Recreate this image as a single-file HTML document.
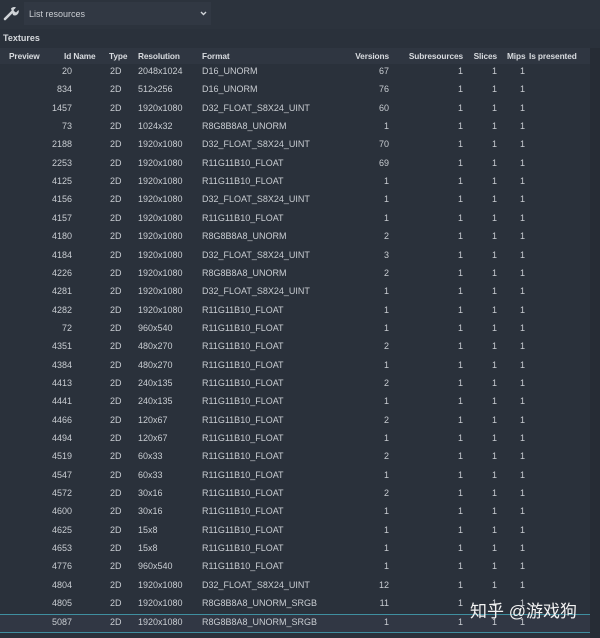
<!DOCTYPE html>
<html><head><style>
body{margin:0;width:600px;height:638px;background:#2a313b;font-family:"Liberation Sans",sans-serif;font-size:9px;color:#c9cdd2;overflow:hidden;position:relative}
.top{position:absolute;left:0;top:0;width:600px;height:29px;background:#2c333d}
.dd{position:absolute;left:24px;top:2px;width:187px;height:23px;background:#313843}
.dd span{position:absolute;left:5px;top:7px;font-size:9px;color:#c9cdd2}
.tex{position:absolute;left:3px;top:33px;font-weight:bold;color:#d6d9dd}
.hdr{position:absolute;left:0;top:48px;width:590px;height:16px;background:#2f3641}
.c{position:absolute;white-space:nowrap}
.r{text-align:right}
.h{font-weight:bold;color:#d9dce0;font-size:8.3px;letter-spacing:-0.1px}
.sb{position:absolute;left:590px;top:48px;width:10px;height:590px;background:#262c35}
</style></head><body>
<div class="top"></div>
<svg style="position:absolute;left:3px;top:5px" width="16" height="16" viewBox="0 0 16 16"><path d="M2 14 L9 7" stroke="#d0d4d8" stroke-width="2.6" stroke-linecap="round"/><path d="M8 3.5 a4 4 0 0 1 5 -1 l-2.5 2.5 1 1.5 1.5 1 2.5 -2.5 a4 4 0 0 1 -5.5 5 z" fill="#d0d4d8"/></svg>
<div class="dd"><span>List resources</span><svg style="position:absolute;left:176px;top:9px" width="7" height="5"><path d="M1 1 L3.5 3.5 L6 1" stroke="#d0d4d8" stroke-width="1.4" fill="none"/></svg></div>
<div class="tex">Textures</div>
<div class="hdr"></div>
<div class="sb"></div>
<div id="t"></div>
<script>
var hd=[["Preview",9,null],["Id Name",64,null],["Type",109,null],["Resolution",138,null],["Format",202,null],["Versions",null,389],["Subresources",null,463],["Slices",null,497],["Mips",507,null],["Is presented",529,null]];
var h='';hd.forEach(function(x){h+='<div class="c h" style="top:51px;'+(x[1]!==null?'left:'+x[1]+'px':'right:'+(600-x[2])+'px')+'">'+x[0]+'</div>';});
var rows=[["20","2048x1024","D16_UNORM",67],["834","512x256","D16_UNORM",76],["1457","1920x1080","D32_FLOAT_S8X24_UINT",60],["73","1024x32","R8G8B8A8_UNORM",1],["2188","1920x1080","D32_FLOAT_S8X24_UINT",70],["2253","1920x1080","R11G11B10_FLOAT",69],["4125","1920x1080","R11G11B10_FLOAT",1],["4156","1920x1080","D32_FLOAT_S8X24_UINT",1],["4157","1920x1080","R11G11B10_FLOAT",1],["4180","1920x1080","R8G8B8A8_UNORM",2],["4184","1920x1080","D32_FLOAT_S8X24_UINT",3],["4226","1920x1080","R8G8B8A8_UNORM",2],["4281","1920x1080","D32_FLOAT_S8X24_UINT",1],["4282","1920x1080","R11G11B10_FLOAT",1],["72","960x540","R11G11B10_FLOAT",1],["4351","480x270","R11G11B10_FLOAT",2],["4384","480x270","R11G11B10_FLOAT",1],["4413","240x135","R11G11B10_FLOAT",2],["4441","240x135","R11G11B10_FLOAT",1],["4466","120x67","R11G11B10_FLOAT",2],["4494","120x67","R11G11B10_FLOAT",1],["4519","60x33","R11G11B10_FLOAT",2],["4547","60x33","R11G11B10_FLOAT",1],["4572","30x16","R11G11B10_FLOAT",2],["4600","30x16","R11G11B10_FLOAT",1],["4625","15x8","R11G11B10_FLOAT",1],["4653","15x8","R11G11B10_FLOAT",1],["4776","960x540","R11G11B10_FLOAT",1],["4804","1920x1080","D32_FLOAT_S8X24_UINT",12],["4805","1920x1080","R8G8B8A8_UNORM_SRGB",11],["5087","1920x1080","R8G8B8A8_UNORM_SRGB",1]];
rows.forEach(function(r,i){var y=66+i*18.35;var t=y;
if(i==30){h+='<div style="position:absolute;left:0;top:'+(y-3)+'px;width:590px;height:17px;background:#313744;border-top:1px solid #3f8fa0;border-bottom:1px solid #3f8fa0"></div>';}
h+='<div class="c r" style="top:'+t+'px;right:528px">'+r[0]+'</div>';
h+='<div class="c" style="top:'+t+'px;left:110px">2D</div>';
h+='<div class="c" style="top:'+t+'px;left:138px">'+r[1]+'</div>';
h+='<div class="c" style="top:'+t+'px;left:202px">'+r[2]+'</div>';
h+='<div class="c r" style="top:'+t+'px;right:211px">'+r[3]+'</div>';
h+='<div class="c r" style="top:'+t+'px;right:137px">1</div>';
h+='<div class="c r" style="top:'+t+'px;right:103px">1</div>';
h+='<div class="c" style="top:'+t+'px;left:520px">1</div>';
});
document.getElementById('t').innerHTML=h;
</script>
<div class="c" style="left:470px;top:597px;font-family:'Liberation Sans','Noto Sans CJK SC',sans-serif;font-size:17px;color:#f2f2f2">知乎 @游戏狗</div>
</body></html>
